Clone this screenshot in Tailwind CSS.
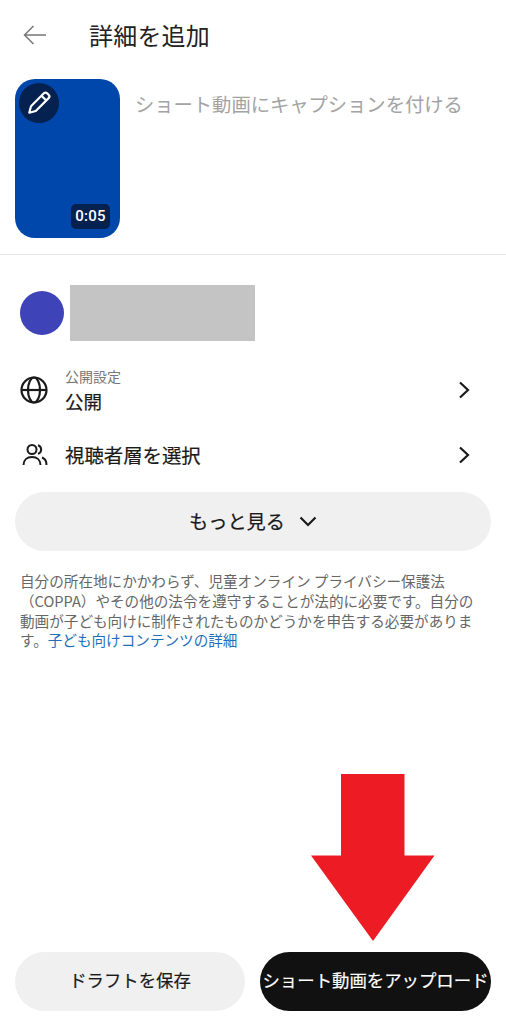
<!DOCTYPE html>
<html lang="ja">
<head>
  <meta charset="UTF-8" />
  <title>詳細を追加</title>
  <script src="https://cdn.jsdelivr.net/npm/@tailwindcss/browser@4"></script>
</head>
<body class="bg-white">
  <div class="relative flex flex-col h-[1024px] w-[506px] overflow-hidden text-[#1a1a1a] font-['Noto_Sans_CJK_JP','Noto_Sans',sans-serif]">
    <!-- header -->
    <header class="flex items-center h-[70px] mb-[2px] pl-[23px]">
      <svg class="w-[24px] h-[20px] text-[#777]" viewBox="0 0 24 20" fill="none" stroke="currentColor" stroke-width="1.5">
        <path d="M23 10H1.5M10.500 1L1.500 10l9 9" />
      </svg>
      <h1 class="ml-[42px] text-[24px] leading-none tracking-[0.2px] text-[#222]">詳細を追加</h1>
    </header>

    <!-- thumbnail + caption -->
    <section class="flex px-[15px] pt-[7px] pb-[16px] border-b border-[#e8e8e8]">
      <div class="relative w-[105px] h-[159px] rounded-[20px] bg-[#0047ab] shrink-0">
        <div class="absolute left-[4px] top-[4px] w-[40px] h-[40px] rounded-full bg-[#04214f] flex items-center justify-center">
          <svg class="w-[26px] h-[26px] text-white" viewBox="0 0 24 24" fill="none" stroke="currentColor" stroke-width="2" stroke-linejoin="round">
            <path d="M3 21l1.600-6L16.500 3.100a2.200 2.200 0 0 1 3.100 0l1.300 1.300a2.200 2.200 0 0 1 0 3.100L9 19.400z" />
            <path d="M14.500 5.500l4 4" />
          </svg>
        </div>
        <div class="absolute right-[10px] bottom-[9px] w-[39px] h-[25px] rounded-[5px] bg-[#04214f] text-white text-[15px] font-medium flex items-center justify-center font-['Roboto',sans-serif] tracking-[0.3px]">0:05</div>
      </div>
      <p class="ml-[15px] mt-[11px] text-[19.300px] leading-[28px] text-[#a3a3a3] whitespace-nowrap">ショート動画にキャプションを付ける</p>
    </section>

    <!-- channel -->
    <section class="flex items-center pl-[20px] mt-[30px]">
      <div class="w-[44px] h-[44px] rounded-full bg-[#3f43b8]"></div>
      <div class="ml-[6px] w-[185px] h-[56px] bg-[#c4c4c4]"></div>
    </section>

    <!-- settings rows -->
    <section class="flex items-center pl-[20px] pr-[36px] mt-[26px]">
      <svg class="w-[28px] h-[28px] shrink-0" viewBox="0 0 28 28" fill="none" stroke="#1a1a1a" stroke-width="2.200">
        <circle cx="14" cy="14" r="12.500" />
        <ellipse cx="14" cy="14" rx="6" ry="12.500" />
        <path d="M1.500 14h25" />
      </svg>
      <div class="ml-[17px] flex-1">
        <p class="text-[14px] leading-[18px] text-[#777]">公開設定</p>
        <p class="text-[18.500px] leading-[22px] mt-[5px] [-webkit-text-stroke:0.2px]">公開</p>
      </div>
      <svg class="w-[12px] h-[18px]" viewBox="0 0 12 18" fill="none" stroke="#1a1a1a" stroke-width="2.200">
        <path d="M2 1.500L10 9l-8 7.500" />
      </svg>
    </section>

    <section class="flex items-center pl-[22px] pr-[36px] mt-[30px]">
      <svg class="w-[26px] h-[24px] shrink-0" viewBox="0 0 26 24" fill="none" stroke="#1a1a1a" stroke-width="2">
        <circle cx="10" cy="6.500" r="4.500" />
        <path d="M1.500 22c0-5 3.500-8 8.500-8s8.500 3 8.500 8" />
        <path d="M16 2.200a4.500 4.500 0 0 1 0 8.600" />
        <path d="M20 14.500c2.800 1 4.500 3.700 4.500 7.500" />
      </svg>
      <p class="ml-[17px] flex-1 text-[19.400px] leading-[26px] [-webkit-text-stroke:0.2px]">視聴者層を選択</p>
      <svg class="w-[12px] h-[18px]" viewBox="0 0 12 18" fill="none" stroke="#1a1a1a" stroke-width="2.200">
        <path d="M2 1.500L10 9l-8 7.500" />
      </svg>
    </section>

    <!-- more -->
    <button class="mx-[15px] mt-[24px] h-[59px] rounded-full bg-[#f0f0f0] flex items-center justify-center gap-[14px] text-[19.200px] [-webkit-text-stroke:0.2px]">
      もっと見る
      <svg class="w-[18px] h-[11px]" viewBox="0 0 18 11" fill="none" stroke="#1a1a1a" stroke-width="2.200">
        <path d="M1.500 1.500L9 9l7.500-7.500" />
      </svg>
    </button>

    <!-- notice -->
    <p class="ml-[20px] mt-[20px] text-[14.600px] leading-[19.800px] text-[#666] whitespace-nowrap">
      自分の所在地にかかわらず、児童オンライン プライバシー保護法<br />（COPPA）やその他の法令を遵守することが法的に必要です。自分の<br />動画が子ども向けに制作されたものかどうかを申告する必要がありま<br />す。<span class="text-[#1f6fb8]">子ども向けコンテンツの詳細</span>
    </p>

    <!-- bottom buttons -->
    <footer class="mt-auto flex gap-[15px] pl-[15px] pr-[15px] pb-[13px]">
      <button class="w-[230px] h-[59px] pb-[2px] rounded-full bg-[#f0f0f0] text-[17.400px] [-webkit-text-stroke:0.2px]">ドラフトを保存</button>
      <button class="w-[231px] h-[59px] pb-[2px] rounded-full bg-[#111] text-white text-[17.400px] [-webkit-text-stroke:0.2px] whitespace-nowrap">ショート動画をアップロード</button>
    </footer>

    <!-- red annotation arrow -->
    <svg class="absolute left-[311px] top-[774px] w-[124px] h-[167px]" viewBox="0 0 124 167" fill="#ed1c24">
      <path d="M30 0h63.500v81.500H123.500L62 167 0 81.500h30z" />
    </svg>
  </div>
</body>
</html>
